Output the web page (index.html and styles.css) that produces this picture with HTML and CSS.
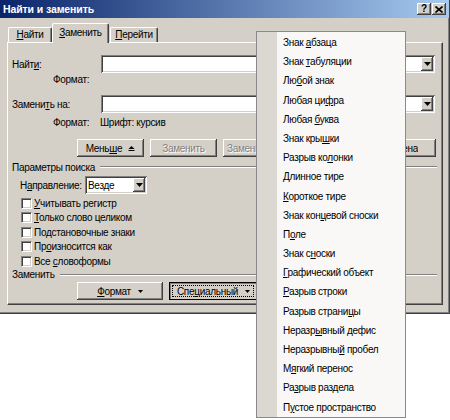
FILE: index.html
```html
<!DOCTYPE html>
<html lang="ru">
<head>
<meta charset="utf-8">
<title>Найти и заменить</title>
<link rel="stylesheet" href="styles.css">
</head>
<body>
<div class="window">
  <div class="titlebar">
    <span class="title">Найти и заменить</span>
    <div class="caption-btns">
      <span class="cbtn raised help">?</span>
      <span class="cbtn raised close"><svg width="8" height="7" viewBox="0 0 8 7"><path d="M0.5 0.5L7.5 6.5M7.5 0.5L0.5 6.5" stroke="#000" stroke-width="1.6" fill="none"/></svg></span>
    </div>
  </div>
  <div class="tabs">
    <div class="tab t1"><u>Н</u>айти</div>
    <div class="tab active"><u>З</u>аменить</div>
    <div class="tab t3"><u>П</u>ерейти</div>
  </div>
  <div class="panel">
    <div class="row r-find">
      <span class="lbl-main">Найт<u>и</u>:</span>
      <div class="combo sunken"><span class="dd raised"><svg width="7" height="4" viewBox="0 0 7 4"><polygon points="0,0 7,0 3.5,4" fill="#000"/></svg></span></div>
    </div>
    <div class="row r-fmt"><span class="fmt-lbl">Формат:</span></div>
    <div class="row r-repl">
      <span class="lbl-main">Замени<u>т</u>ь на:</span>
      <div class="combo sunken"><span class="dd raised"><svg width="7" height="4" viewBox="0 0 7 4"><polygon points="0,0 7,0 3.5,4" fill="#000"/></svg></span></div>
    </div>
    <div class="row r-fmt2"><span class="fmt-lbl">Формат:</span><span>Шрифт: курсив</span></div>
    <div class="row r-btns">
      <span class="btn raised">Мень<u>ш</u>е <svg class="less" width="7" height="7" viewBox="0 0 7 7"><polygon points="0.5,4 3.5,1 6.5,4" fill="#000"/><rect x="0.5" y="5" width="6" height="1" fill="#000"/></svg></span>
      <span class="btn raised disabled">Заменить</span>
      <span class="btn raised disabled b-all"><span class="clip-l">Заменить все</span></span>
      <span class="btn raised"></span>
      <span class="btn raised b-cancel"><span class="clip-r"><span class="inner">Отмена</span></span></span>
    </div>
    <div class="row sep s1"><span>Параметры поиска</span><span class="line"></span></div>
    <div class="row r-dir">
      <span class="dir-lbl">Н<u>а</u>правление:</span>
      <div class="select sunken"><span class="sel-text">Везде</span><span class="dd raised"><svg width="7" height="4" viewBox="0 0 7 4"><polygon points="0,0 7,0 3.5,4" fill="#000"/></svg></span></div>
    </div>
    <div class="checks">
      <div class="cb"><span class="box"></span><span><u>У</u>читывать регистр</span></div>
      <div class="cb"><span class="box"></span><span><u>Т</u>олько слово целиком</span></div>
      <div class="cb"><span class="box"></span><span>Подстановочные знаки</span></div>
      <div class="cb"><span class="box"></span><span>Пр<u>о</u>износится как</span></div>
      <div class="cb"><span class="box"></span><span>Все <u>с</u>ловоформы</span></div>
    </div>
    <div class="row sep s2"><span>Заменить</span><span class="line"></span></div>
    <div class="row r-bottom">
      <span class="btn raised b-fmt"><u>Ф</u>ормат <svg class="arr" width="5" height="3" viewBox="0 0 5 3"><polygon points="0,0 5,0 2.5,3" fill="#000"/></svg></span>
      <span class="btn b-spec"><span class="focus">Спе<u>ц</u>иальный <svg class="arr" width="5" height="3" viewBox="0 0 5 3"><polygon points="0,0 5,0 2.5,3" fill="#000"/></svg></span></span>
      <span class="btn raised b-clear"></span>
    </div>
  </div>
</div>
<div class="menu">
  <div class="mi">Знак <u>а</u>бзаца</div>
  <div class="mi">Знак <u>т</u>абуляции</div>
  <div class="mi">Лю<u>б</u>ой знак</div>
  <div class="mi">Любая ци<u>ф</u>ра</div>
  <div class="mi">Любая <u>б</u>уква</div>
  <div class="mi">Знак кры<u>ш</u>ки</div>
  <div class="mi">Разрыв ко<u>л</u>онки</div>
  <div class="mi"><u>Д</u>линное тире</div>
  <div class="mi"><u>К</u>ороткое тире</div>
  <div class="mi">Знак кон<u>ц</u>евой сноски</div>
  <div class="mi">П<u>о</u>ле</div>
  <div class="mi">Знак с<u>н</u>оски</div>
  <div class="mi"><u>Г</u>рафический объект</div>
  <div class="mi"><u>Р</u>азрыв строки</div>
  <div class="mi">Разрыв страни<u>ц</u>ы</div>
  <div class="mi">Неразр<u>ы</u>вный дефис</div>
  <div class="mi">Неразрывны<u>й</u> пробел</div>
  <div class="mi">М<u>я</u>гкий перенос</div>
  <div class="mi">Ра<u>з</u>рыв раздела</div>
  <div class="mi">П<u>у</u>стое пространство</div>
</div>
</body>
</html>
```

FILE: styles.css
```css
* { box-sizing: border-box; }
html, body { margin: 0; padding: 0; }
body {
  width: 450px;
  height: 420px;
  background: #ffffff;
  position: relative;
  overflow: hidden;
  font-family: "Liberation Sans", Arial, sans-serif;
  font-size: 10px;
  letter-spacing: -0.3px;
  color: #000;
}
u { text-decoration: underline; text-underline-offset: 1px; }

.raised {
  background: #d4d0c8;
  box-shadow: inset -1px -1px #404040, inset 1px 1px #ffffff, inset -2px -2px #808080;
}
.sunken {
  background: #ffffff;
  box-shadow: inset 1px 1px #808080, inset -1px -1px #ffffff, inset 2px 2px #404040, inset -2px -2px #d4d0c8;
}

.window {
  width: 450px;
  height: 314px;
  background: #d4d0c8;
  border-right: 1px solid #404040;
  border-bottom: 1px solid #404040;
  box-shadow: inset -1px -1px #808080;
}

.titlebar {
  height: 18px;
  display: flex;
  align-items: center;
  background: linear-gradient(90deg, #0a246a 0%, #a6caf0 100%);
  padding-left: 3px;
  padding-right: 3px;
}
.title { color: #fff; font-weight: bold; font-size: 10.5px; letter-spacing: -0.1px; }
.caption-btns { margin-left: auto; display: flex; gap: 1px; }
.cbtn {
  width: 14px;
  height: 12px;
  display: flex;
  align-items: center;
  justify-content: center;
  font-weight: bold;
  font-size: 10px;
  line-height: 10px;
  letter-spacing: 0;
}

.tabs {
  height: 24px;
  display: flex;
  align-items: flex-end;
  padding-left: 8px;
}
.tab {
  height: 15px;
  border-top: 1px solid #fff;
  border-left: 1px solid #fff;
  border-right: 1px solid #404040;
  box-shadow: inset -1px 0 #808080;
  border-radius: 2px 2px 0 0;
  text-align: center;
  line-height: 14px;
  background: #d4d0c8;
}
.t1 { width: 44px; }
.t3 { width: 48px; margin-left: 1px; }
.tab.active {
  width: 57px;
  height: 20px;
  margin-bottom: -1px;
  position: relative;
  z-index: 1;
  line-height: 17px;
}

.panel {
  margin-left: 7px;
  width: 436px;
  height: 263px;
  border-top: 1px solid #fff;
  border-left: 1px solid #fff;
  border-right: 1px solid #404040;
  border-bottom: 1px solid #404040;
  box-shadow: inset -1px -1px #808080;
}

.row { display: flex; align-items: center; }
.lbl-main { width: 93px; padding-left: 4px; }
.combo {
  width: 334px;
  height: 18px;
  display: flex;
  justify-content: flex-end;
  padding: 2px;
}
.dd {
  width: 12px;
  height: 14px;
  display: flex;
  align-items: center;
  justify-content: center;
}
.dd svg { display: block; }

.r-find { margin-top: 12px; height: 18px; }
.r-fmt { height: 13px; padding-left: 45px; }
.r-repl { margin-top: 9px; height: 18px; }
.r-fmt2 { margin-top: 2px; height: 14px; padding-left: 45px; }
.fmt-lbl { width: 47px; }

.r-btns { margin-top: 10px; height: 18px; padding-left: 69px; gap: 6px; }
.btn {
  width: 67px;
  height: 18px;
  flex: none;
  display: flex;
  align-items: center;
  justify-content: center;
  white-space: nowrap;
}
.btn .less { margin-left: 6px; }
.btn .arr { margin-left: 7px; }
.disabled { color: #808080; text-shadow: 1px 1px #ffffff; }

.b-all { justify-content: flex-start; padding-left: 4px; }
.clip-l { width: 29px; overflow: hidden; white-space: nowrap; }
.b-cancel { justify-content: flex-start; padding-left: 36px; }
.clip-r { width: 13px; overflow: hidden; display: flex; justify-content: flex-end; }
.clip-r .inner { flex: none; white-space: nowrap; }

.sep { padding-left: 4px; padding-right: 5px; gap: 5px; }
.sep .line {
  flex: 1;
  height: 2px;
  border-top: 1px solid #808080;
  border-bottom: 1px solid #ffffff;
}
.s1 { margin-top: 3px; height: 14px; }
.s2 { height: 12px; }

.r-dir { margin-top: 2px; height: 18px; padding-left: 12px; }
.dir-lbl { width: 65px; }
.select {
  width: 62px;
  height: 18px;
  display: flex;
  align-items: center;
  padding: 2px;
}
.sel-text { flex: 1; padding-left: 1px; }

.checks { margin-top: 2px; }
.cb {
  height: 14.5px;
  display: flex;
  align-items: center;
  padding-left: 13px;
  gap: 2px;
}
.cb .box {
  width: 11px;
  height: 11px;
  background: #fff;
  border-top: 1px solid #808080;
  border-left: 1px solid #808080;
  border-bottom: 1px solid #ffffff;
  border-right: 1px solid #ffffff;
  box-shadow: inset 1px 1px #404040, inset -1px -1px #d4d0c8;
}

.r-bottom { margin-top: 1.5px; height: 18px; padding-left: 69px; gap: 6px; }
.b-fmt { width: 86px; }
.b-spec {
  width: 88px;
  background: #d4d0c8;
  border: 1px solid #000;
  box-shadow: inset 1px 1px #808080;
  padding: 2px;
}
.b-spec .focus {
  width: 100%;
  height: 100%;
  display: flex;
  align-items: center;
  justify-content: center;
  outline: 1px dotted #000;
  outline-offset: -1px;
  padding-top: 1px;
  padding-left: 1px;
}
.b-clear { width: 130px; }

.menu {
  position: absolute;
  left: 256px;
  top: 31px;
  width: 150px;
  height: 387px;
  border: 1px solid #8a8a8a;
  background: linear-gradient(90deg, #dbd8d1 0, #dbd8d1 20px, #f9f8f7 20px);
  padding-top: 1px;
  z-index: 5;
}
.mi {
  height: 19.2px;
  line-height: 19.2px;
  padding-left: 26px;
  white-space: nowrap;
}
```
